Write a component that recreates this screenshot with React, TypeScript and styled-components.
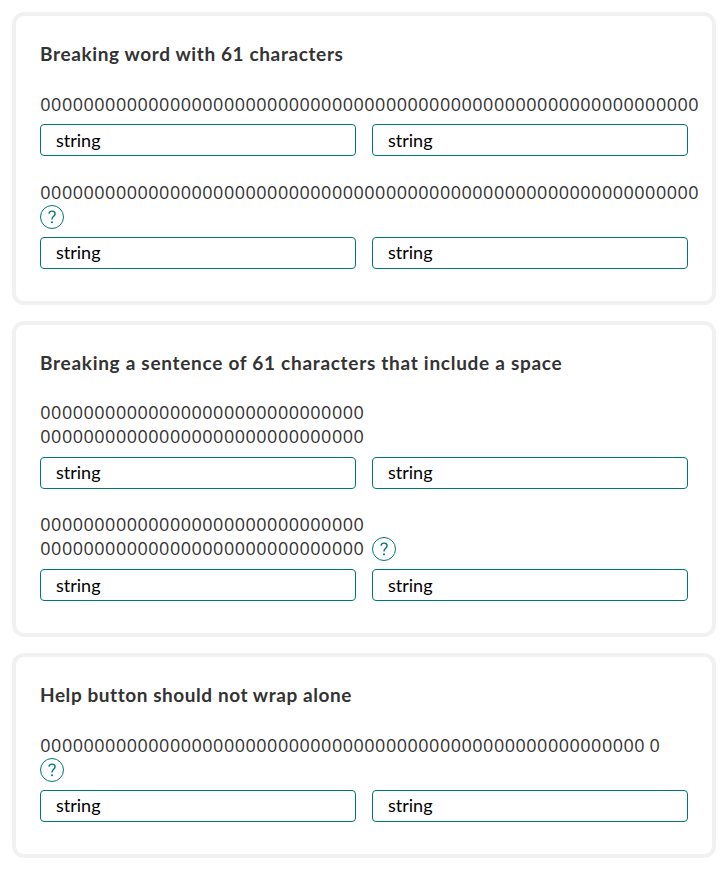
import React from 'react';
import styled, { createGlobalStyle } from 'styled-components';

const GlobalStyle = createGlobalStyle`
  *, *::before, *::after { box-sizing: border-box; }
  body {
    margin: 0;
    background: #fff;
    color: #333;
    font-family: Lato, "Open Sans", sans-serif;
  }
`;

const Page = styled.main`
  display: flex;
  flex-direction: column;
  gap: 16px;
  padding: 12px;
`;

const Card = styled.section`
  border: 4px solid #f1f1f3;
  border-radius: 12px;
  padding: 24px 24px 32px;
`;

const Title = styled.h2<{ $tracking: number }>`
  margin: 0 0 24px;
  height: 28px;
  font-size: 19px;
  line-height: 28px;
  font-weight: 700;
  letter-spacing: ${(p) => p.$tracking}px;
  white-space: nowrap;
`;

const Rows = styled.div`
  display: flex;
  flex-direction: column;
  gap: 24px;
`;

const Row = styled.div`
  display: flex;
  flex-direction: column;
  gap: 8px;
`;

const Label = styled.div<{ $stacked: boolean }>`
  display: flex;
  flex-direction: ${(p) => (p.$stacked ? 'column' : 'row')};
  align-items: ${(p) => (p.$stacked ? 'flex-start' : 'flex-end')};
  gap: ${(p) => (p.$stacked ? '1px' : '8px')};
  font-family: "Open Sans", "Noto Sans", sans-serif;
  font-size: 18px;
  line-height: 24px;
  letter-spacing: 0.508px;
  word-spacing: -0.8px;
`;

const LabelText = styled.span<{ $multiline: boolean }>`
  display: flex;
  flex-direction: column;
  width: min-content;
  margin: ${(p) => (p.$multiline ? '-1px 0 1px' : '0')};
  text-indent: 0.3px;
  white-space: nowrap;
`;

const HelpButton = styled.button`
  display: flex;
  width: 24px;
  height: 24px;
  padding: 0;
  border: 1px solid #007770;
  border-radius: 50%;
  background: #fff;
  color: #007770;
`;

const Fields = styled.div`
  display: grid;
  grid-template-columns: 1fr 1fr;
  gap: 16px;
`;

const Field = styled.input<{ $raised: boolean }>`
  width: 100%;
  min-width: 0;
  height: 32px;
  padding: 0 15px ${(p) => (p.$raised ? 2 : 0)}px;
  border: 1px solid #007770;
  border-radius: 4px;
  background: #fff;
  color: #000;
  font: 400 18px Lato, "Open Sans", sans-serif;
  letter-spacing: 0;
  outline: none;
`;

type RowData = { lines: string[]; help?: 'inline' | 'below'; raised?: boolean };

const LONG = '0'.repeat(61);
const HALF = '0'.repeat(30);

const CARDS: { title: string; tracking: number; rows: RowData[] }[] = [
  {
    title: 'Breaking word with 61 characters',
    tracking: 0.62,
    rows: [{ lines: [LONG] }, { lines: [LONG], help: 'below', raised: true }],
  },
  {
    title: 'Breaking a sentence of 61 characters that include a space',
    tracking: 0.71,
    rows: [
      { lines: [HALF, HALF], raised: true },
      { lines: [HALF, HALF], help: 'inline' },
    ],
  },
  {
    title: 'Help button should not wrap alone',
    tracking: 0.56,
    rows: [{ lines: ['0'.repeat(56) + ' 0'], help: 'below', raised: true }],
  },
];

function Help() {
  return (
    <HelpButton type="button" aria-label="Help">
      <svg width="22" height="22" viewBox="0 0 22 22" fill="none">
        <path
          d="M8.1 7.8C8.1 6.1 9.3 5.1 11.1 5.1C12.9 5.1 14.1 6.2 14.1 7.8C14.1 9.2 13.3 9.8 12.4 10.5C11.5 11.2 11 11.8 11 13.4"
          stroke="currentColor"
          strokeWidth="1.4"
        />
        <circle cx="11" cy="16.3" r="1" fill="currentColor" />
      </svg>
    </HelpButton>
  );
}

export default function App() {
  return (
    <>
      <GlobalStyle />
      <Page>
        {CARDS.map((card) => (
          <Card key={card.title}>
            <Title $tracking={card.tracking}>{card.title}</Title>
            <Rows>
              {card.rows.map((row, i) => (
                <Row key={i}>
                  <Label $stacked={row.help === 'below'}>
                    <LabelText $multiline={row.lines.length > 1}>
                      {row.lines.map((line, n) => (
                        <span key={n}>{line}</span>
                      ))}
                    </LabelText>
                    {row.help && <Help />}
                  </Label>
                  <Fields>
                    <Field $raised={!!row.raised} defaultValue="string" aria-label="First value" />
                    <Field $raised={!!row.raised} defaultValue="string" aria-label="Second value" />
                  </Fields>
                </Row>
              ))}
            </Rows>
          </Card>
        ))}
      </Page>
    </>
  );
}
